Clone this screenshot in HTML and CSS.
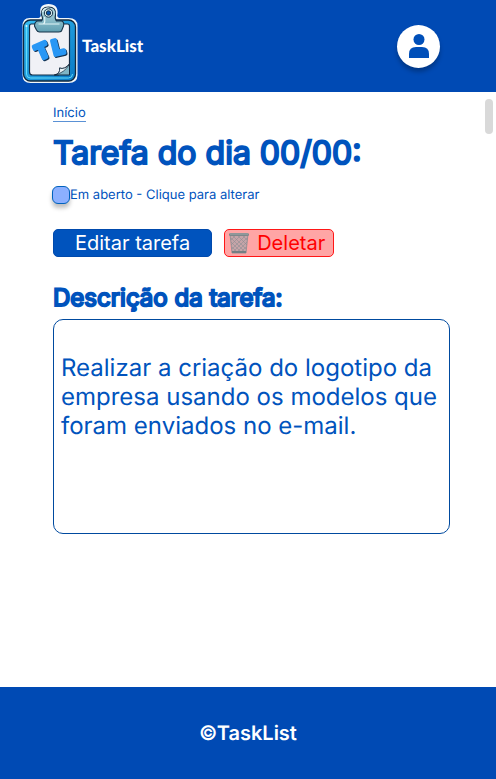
FILE: index.html
```html
<!DOCTYPE html>
<html lang="pt-BR">
<head>
<meta charset="utf-8">
<meta name="viewport" content="width=device-width, initial-scale=1">
<title>TaskList</title>
<link rel="stylesheet" href="styles.css">
</head>
<body>
<header class="header">
  <a class="brand" href="#">
    <svg class="logo" viewBox="0 0 56 80" aria-hidden="true">
      <defs>
        <linearGradient id="board" x1="0" y1="0" x2="1" y2="1">
          <stop offset="0" stop-color="#35bdf3"/>
          <stop offset="1" stop-color="#0878c4"/>
        </linearGradient>
        <linearGradient id="metal" x1="0" y1="0" x2="0" y2="1">
          <stop offset="0" stop-color="#b9dce2"/>
          <stop offset="1" stop-color="#5f9fb2"/>
        </linearGradient>
      </defs>
      <path d="M8 14H17Q20 13 19 10Q17 0 27 0Q37 0 36 10Q35 13 38 14H47Q56 14 56 22V71Q56 79 47 79H9Q1 79 1 71V22Q1 14 8 14Z" fill="#f1f7fa"/>
      <rect x="2" y="16" width="52" height="61" rx="7" fill="url(#board)" stroke="#10283f" stroke-width="1.3"/>
      <path d="M5 23V70Q5 74 9 74H47Q51 74 51 70" fill="none" stroke="#65dcfb" stroke-width="1"/>
      <path d="M10 20H46Q48 20 48 22V61L37 71H11Q8 71 8 68V22Q8 20 10 20Z" fill="#f0f1f6" stroke="#152e47" stroke-width="1.2"/>
      <path d="M33 71Q39 70 38 64Q43 66 48 60V71Z" fill="#7fb5c5" stroke="#14293d"/>
      <path d="M38 64Q43 66 48 60Q43 69 33 71Q39 70 38 64Z" fill="#e8f2f5" stroke="#14293d" stroke-width=".7"/>
      <path d="M20 11Q19 3 27 3Q35 3 34 11Q33 15 35 17H40Q43 18 42 22L40 27Q39 28 37 28H18Q16 28 15 26L13 22Q13 18 16 17H20Q22 15 20 11Z" fill="url(#metal)" stroke="#173349" stroke-width="1.1"/>
      <path d="M17 20H38M23 13Q24 18 22 20M21 8Q22 4 27 4" fill="none" stroke="#e2f5f7" stroke-width="1.2"/>
      <circle cx="27" cy="9" r="4.2" fill="#d7ecef" stroke="#173349"/>
      <circle cx="27" cy="9" r="2.2" fill="#0754ad" stroke="#173349"/>
      <circle cx="5" cy="22" r="1" fill="#d7f7ff"/>
      <g class="logo-letters">
        <text x="14" y="54" transform="rotate(-24 21 47)">T</text>
        <text x="31" y="50" transform="rotate(-14 37 44)">L</text>
      </g>
    </svg>
    <span class="brand-name">TaskList</span>
  </a>
  <button class="profile" type="button" aria-label="Perfil">
    <svg viewBox="0 0 20 24" aria-hidden="true">
      <circle cx="10" cy="5.5" r="5.5"/>
      <path d="M0 24V20Q0 13 7 13H13Q20 13 20 20V24Z"/>
    </svg>
  </button>
</header>
<div class="scroll-thumb"></div>
<main class="content">
  <a class="breadcrumb" href="#">Início</a>
  <h1>Tarefa do dia 00/00:</h1>
  <div class="status">
    <input type="checkbox" id="status">
    <label for="status">Em aberto - Clique para alterar</label>
  </div>
  <div class="actions">
    <button class="button edit" type="button">Editar tarefa</button>
    <button class="button delete" type="button">
      <svg class="trash" viewBox="0 0 20 22" aria-hidden="true">
        <path d="M1 2H19L17 21H3Z" fill="#c5a4a8" stroke="#858b8f" stroke-width=".8"/>
        <path d="M2 6L16 20M4 4L17 17M9 4L18 13M14 4L18 8M2 10L13 21M3 15L8 20M18 6L4 20M16 4L3 17M11 4L2 13M6 4L2 8M18 10L8 20M17 15L12 20" fill="none" stroke="#858b91" stroke-width=".5"/>
        <path d="M3 19H17V21H3Z" fill="#747e83"/>
        <rect x="0" y="1" width="20" height="3" rx="1.5" fill="#7d878a"/>
        <path d="M1 2H19" stroke="#aab0b1" stroke-width=".8"/>
      </svg>
      <span>Deletar</span>
    </button>
  </div>
  <h2>Descrição da tarefa:</h2>
  <p class="description">Realizar a criação do logotipo da empresa usando os modelos que foram enviados no e-mail.</p>
</main>
<footer class="footer">©TaskList</footer>
</body>
</html>
```
FILE: styles.css
```css
* {
  box-sizing: border-box;
}

body {
  --blue: #0053bd;
  position: relative;
  display: flex;
  flex-direction: column;
  min-height: 100vh;
  margin: 0;
  background: #fff;
  color: var(--blue);
  font-family: Inter, "Liberation Sans", sans-serif;
  text-rendering: geometricPrecision;
}

.header,
.footer {
  flex: none;
  min-height: 92px;
  background: #004ab4;
  color: #fff;
}

.header {
  display: flex;
  align-items: center;
  justify-content: space-between;
  padding: 0 56px 0 21px;
}

.brand {
  display: flex;
  align-items: center;
  gap: 4px;
  color: #fff;
  text-decoration: none;
}

.logo {
  width: 57px;
  height: 80px;
  margin-bottom: 4px;
}

.logo-letters {
  fill: #2897f5;
  stroke: #2897f5;
  stroke-width: 4;
  stroke-linejoin: round;
  font: 700 20px Inter, sans-serif;
  filter: drop-shadow(1px 1px 0 #12304f);
}

.brand-name {
  font: 900 17px/24px Lato, sans-serif;
}

.profile {
  display: grid;
  place-items: center;
  width: 43px;
  height: 43px;
  padding: 0;
  border: 0;
  border-radius: 50%;
  background: #fff;
  box-shadow: 0 4px 4px rgb(0 0 0 / 25%);
}

.profile svg {
  width: 20px;
  height: 24px;
  fill: #004fb9;
}

.scroll-thumb {
  position: absolute;
  top: 99px;
  right: 3px;
  width: 8px;
  height: 35px;
  border-radius: 4px;
  background: #d9d9d9;
}

.content {
  display: flex;
  flex: 1;
  flex-direction: column;
  align-items: flex-start;
  padding: 14px 46px 24px 53px;
}

.breadcrumb {
  border-bottom: 1px solid #5a91d5;
  color: inherit;
  font-size: 13px;
  line-height: 15px;
  text-decoration: none;
}

h1,
h2 {
  margin: 0;
  font-weight: 400;
  -webkit-text-stroke: 2px var(--blue);
}

h1 {
  margin-top: 10px;
  font-size: 32px;
  line-height: 42px;
}

.status {
  display: flex;
  align-items: center;
  margin: 11px 0 0 -1px;
  font-size: 13px;
  line-height: 20px;
}

.status input {
  width: 18px;
  height: 18px;
  margin: 0;
  border: 1px solid #0062bd;
  border-radius: 6px;
  appearance: none;
  background: #8cb0ff;
  box-shadow: 0 4px 4px rgb(0 0 0 / 25%);
}

.actions {
  display: flex;
  gap: 12px;
  margin-top: 24px;
}

.button {
  display: flex;
  align-items: center;
  justify-content: center;
  height: 28px;
  padding: 0 8px 0 4px;
  border: 1px solid;
  border-radius: 5px;
  font: 400 20px/24px Inter, sans-serif;
}

.edit {
  padding: 0 21px;
  border-color: #004aad;
  background: var(--blue);
  color: #fff;
}

.delete {
  gap: 8px;
  border-color: #ff1717;
  background: #ffa5a5;
  color: #f00;
}

.trash {
  width: 20px;
  height: 22px;
}

h2 {
  margin-top: 25px;
  font-size: 24px;
  line-height: 32px;
}

.description {
  align-self: stretch;
  min-height: 215px;
  margin: 5px 0 0;
  padding: 33px 7px;
  border: 1px solid #004a9f;
  border-radius: 10px;
  font-size: 24px;
  line-height: 29px;
}

.footer {
  display: grid;
  place-items: center;
  font-size: 20px;
  font-weight: 600;
  line-height: 24px;
}
```
